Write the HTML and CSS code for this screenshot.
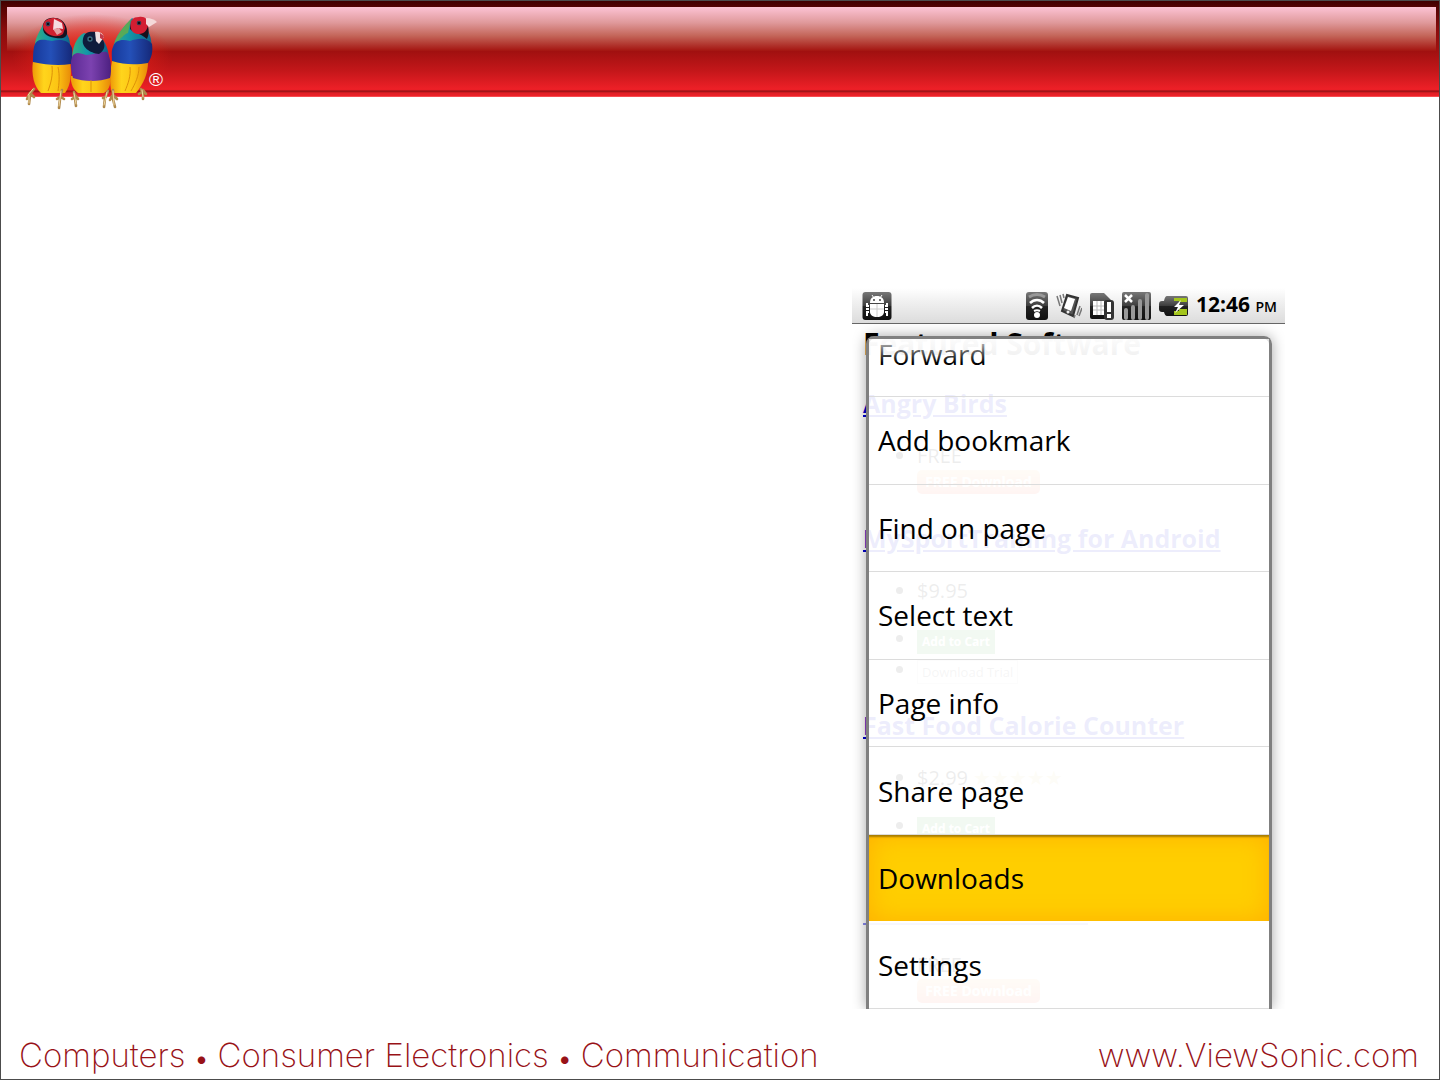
FILE: index.html
```html
<!DOCTYPE html>
<html lang="en">
<head>
    <meta charset="UTF-8">
    <meta name="viewport" content="width=device-width, initial-scale=1.0">
    <title>ViewSonic</title>
    <link rel="stylesheet" href="styles.css">
</head>
<body>

<header class="banner">
    <div class="gloss"></div>
    <svg class="logo" width="200" height="120" viewBox="0 0 200 120" role="img" aria-label="ViewSonic birds">
        <defs>
            <radialGradient id="halo">
                <stop offset="0" stop-color="#ff2018" stop-opacity=".9"/>
                <stop offset=".6" stop-color="#f02018" stop-opacity=".5"/>
                <stop offset="1" stop-color="#e02018" stop-opacity="0"/>
            </radialGradient>
            <linearGradient id="belly" x1="0" x2="1">
                <stop offset="0" stop-color="#ee9a08"/>
                <stop offset=".3" stop-color="#ffd51c"/>
                <stop offset=".65" stop-color="#fcc414"/>
                <stop offset="1" stop-color="#e88a08"/>
            </linearGradient>
            <linearGradient id="blue" x1="0" x2="1">
                <stop offset="0" stop-color="#16389a"/>
                <stop offset=".45" stop-color="#2450b8"/>
                <stop offset="1" stop-color="#152878"/>
            </linearGradient>
            <linearGradient id="purple" x1="0" x2="1">
                <stop offset="0" stop-color="#5c2a94"/>
                <stop offset=".5" stop-color="#7c42b0"/>
                <stop offset="1" stop-color="#4c2080"/>
            </linearGradient>
            <linearGradient id="teal" x1="0" x2="1">
                <stop offset="0" stop-color="#35b07c"/>
                <stop offset=".4" stop-color="#1497a8"/>
                <stop offset="1" stop-color="#0d648c"/>
            </linearGradient>
        </defs>
        <ellipse cx="92" cy="56" rx="80" ry="42" fill="url(#halo)"/>
        <!-- left bird -->
        <path d="M33 61C31 74 34 87 41 93h24c6-8 7-20 5-31z" fill="url(#belly)"/>
        <path d="M43 24c-3 8-9 14-8 25h35c1-11-4-17-7-21z" fill="url(#teal)"/>
        <path d="M34 47c2-9 9-8 18-6 9-2 17-1 20 7 1 6 0 11-1 16-12 2-25 1-38-2 0-5 0-10 1-15z" fill="url(#blue)"/>
        <path d="M43 28c-1-7 5-11 12-10 7 0 12 7 12 13 1 7-5 8-11 7-7-1-13-3-13-10z" fill="#17111f"/>
        <path d="M43 27c0-7 6-9 11-9 6 0 10 4 11 10l-2 6c-7 5-18 1-20-7z" fill="#cf2030"/>
        <path d="M54 19l8 4 1 6-5-1-5 2z" fill="#f5dce0"/>
        <path d="M53 29l6-1 3 4-5 3z" fill="#e3a0a4"/>
        <circle cx="48" cy="24" r="2.4" fill="#333f58"/><circle cx="48" cy="24" r="1" fill="#000"/>
        <path d="M52 66c1 9-1 17-4 25M58 67c2 9 1 17 0 24" stroke="#dd9108" fill="none"/>
        <!-- right bird -->
        <path d="M112 61c-2 10-3 23 0 32h24c8-10 12-20 12-31z" fill="url(#belly)"/>
        <path d="M132 18c-8 9-18 18-19 32h38c2-9-2-19-5-22z" fill="url(#teal)"/>
        <path d="M131 19c-7 7-13 14-16 24 6-4 9-9 13-10z" fill="#58aa58"/>
        <path d="M113 47c2-7 9-8 17-6 8-3 17-4 22 3 1 7 0 13-4 19-11 2-24 2-36-2 0-5-1-10 1-14z" fill="url(#blue)"/>
        <path d="M130 29c2 3 10 4 17 10 2-4 2-9 1-13l-7-8c-6-1-11 4-11 11z" fill="#17101c"/>
        <path d="M131 29c-2-9 2-12 8-12 6-1 9 3 9 7 0 6-4 10-9 10-4 0-7-2-8-5z" fill="#d31e32"/>
        <path d="M146 18c5 0 9 2 11 4l-8 5-3-3z" fill="#f4d9d9"/>
        <circle cx="139" cy="23" r="2.3" fill="#30384c"/><circle cx="139" cy="23" r="1" fill="#000"/>
        <path d="M130 67c1 9-2 17-5 24M139 67c0 9-4 17-8 24" stroke="#dd9108" fill="none"/>
        <!-- middle bird -->
        <path d="M71 76c-1 8 3 14 7 17h26c6-4 7-10 6-17z" fill="url(#belly)"/>
        <path d="M84 33c-8 4-12 15-12 27h37c0-9-3-16-6-20z" fill="url(#teal)"/>
        <path d="M72 57c3-6 8-4 14-2 8 0 13-4 21-3 4 6 5 18 3 26-11 4-26 4-37 0-2-7-3-14-1-21z" fill="url(#purple)"/>
        <path d="M83 39c1-7 7-8 13-7l6 6c4 7 3 12-3 16-9-1-18-7-16-15z" fill="#0e1c3c"/>
        <path d="M95 32c5-1 8 2 9 5l-5 7-3-3z" fill="#eee1e3"/><path d="M100 33l4 3-1 4-3-2z" fill="#c33a48"/>
        <circle cx="90" cy="39" r="2.7" fill="#3b6c80"/><circle cx="90" cy="39" r="1.3" fill="#05091a"/>
        <path d="M91 80v12" stroke="#dd9108"/>
        <!-- feet -->
        <g fill="none" stroke="#b08a4c" stroke-width="2.6" stroke-linecap="round">
            <path d="M34 89l-5 6-2 4M30 95l-1 9M30 93l4 4M62 90l-2 9-1 9M60 97l-3 2M61 97l3 2M74 92l1 6 1 8M75 97l-3 2M75 95l3 4M108 91l-3 7-1 9M106 97l-3 1M113 90v9l2 8M113 95l4 4M112 96l-2 4M141 89l2 5v5M142 92l-3 2M143 90l3 4"/>
        </g>
        <g fill="none" stroke="#f1d9a0" stroke-linecap="round">
            <path d="M33 89l-5 6M29 95v8M61 91l-2 15M74 93l2 11M107 92l-3 13M113 91l1 14M142 90l1 7"/>
        </g>
        <text class="registered" x="149" y="86">®</text>
    </svg>
</header>

<main class="content">
    <section class="phone">
        <div class="status-bar">
            <svg width="30" height="30" viewBox="0 0 30 30" aria-label="Android">
                <defs>
                    <linearGradient id="tile" x2="0" y2="1">
                        <stop offset="0" stop-color="#777"/>
                        <stop offset=".5" stop-color="#3c3c3c"/>
                        <stop offset=".52" stop-color="#222"/>
                        <stop offset="1" stop-color="#111"/>
                    </linearGradient>
                </defs>
                <rect x=".5" y="1" width="29" height="28" rx="3" fill="url(#tile)"/>
                <path d="M8 12c0-5 3-7 7-7s7 2 7 7z" fill="#fff"/>
                <path d="M10 4l2 3M20 4l-2 3" stroke="#fff"/>
                <circle cx="12" cy="9" r="1" fill="#444"/><circle cx="18" cy="9" r="1" fill="#444"/>
                <path d="M8 13h14v8c0 3-3 5-7 5s-7-2-7-5z" fill="#fff"/>
                <path d="M15 13v13M8 18h14" stroke="#ccc"/>
                <path d="M7 15H5v-3M7 18H4M7 21H5v4M23 15h2v-3M23 18h3M23 21h2v4" stroke="#fff" stroke-width="2" fill="none"/>
            </svg>
            <div class="status-icons">
                <svg width="22" height="30" viewBox="0 0 22 30" aria-label="Wi-Fi">
                    <rect y="1" width="22" height="28" rx="3" fill="url(#tile)"/>
                    <path d="M3 6c5-3 11-3 16 0" stroke="#999" stroke-width="3" fill="none"/>
                    <path d="M4 12c4-4 10-4 14 0M6 17c3-3 7-3 10 0" stroke="#fff" stroke-width="2.5" fill="none"/>
                    <path d="M8 20c2-1 4-1 6 0" stroke="#fff" stroke-width="2" fill="none"/>
                    <circle cx="11" cy="24" r="3" fill="#fff"/>
                </svg>
                <svg width="26" height="30" viewBox="0 0 26 30" aria-label="Vibrate">
                    <path d="M11 4l11 3-5 18-11-5z" fill="#555" stroke="#333" stroke-width="2"/>
                    <path d="M12 6l7 2-4 12-7-3z" fill="#fff"/><circle cx="12" cy="21" r="1.5" fill="#eee"/>
                    <path d="M1 5l3 10M4 4l2 8M7 3l1 4M24 15l-3 9M26 17l-3 8M19 24l-1 3" stroke="#777" stroke-width="1.5"/>
                </svg>
                <svg width="24" height="30" viewBox="0 0 24 30" aria-label="SIM card">
                    <path d="M2 2h12l7 7v17q0 2-2 2H2q-2 0-2-2V4q0-2 2-2z" fill="url(#tile)"/>
                    <path d="M3 10h11v14H3z" fill="#fff"/><path d="M3 15h11M3 19h11M7 10v14M11 10v14" stroke="#bbb"/>
                    <rect x="14" y="9" width="10" height="20" rx="3" fill="#333"/>
                    <path d="M19 11v10M19 23v4" stroke="#fff" stroke-width="4"/>
                </svg>
                <svg width="29" height="30" viewBox="0 0 29 30" aria-label="No signal">
                    <rect y="1" width="29" height="28" rx="2" fill="url(#tile)"/>
                    <path d="M3 4l7 7M10 4l-7 7" stroke="#fff" stroke-width="2.5"/>
                    <path d="M4 27v-8M11 27V16M18 27V10M25 27V4" stroke="#999" stroke-width="4" stroke-linecap="round"/>
                </svg>
                <svg width="29" height="30" viewBox="0 0 29 30" aria-label="Charging">
                    <path d="M8 5h19q2 0 2 2v16q0 2-2 2H8q-2 0-3-4H3q-3 0-3-3v-5q0-3 3-3h2q1-5 3-5z" fill="url(#tile)"/>
                    <path d="M15 7h13v4h-8v-1h-5zM15 20h5v-2h8v6H15z" fill="#a3c51c"/>
                    <path d="M22 9l-7 7h4l-3 6 9-8h-5z" fill="#fff"/>
                </svg>
                <span class="clock">12:46 <small>PM</small></span>
            </div>
        </div>

        <div class="web-page">
            <h1>Featured Software</h1>
            <h2><a href="#">Angry Birds</a></h2>
            <ul class="free">
                <li>FREE<br><button class="free-button" type="button">FREE Download</button></li>
            </ul>
            <h2><a href="#">MySportTraining for Android</a></h2>
            <ul>
                <li>$9.95</li>
                <li class="cart"><button class="cart-button" type="button">Add to Cart</button></li>
                <li><button class="trial-button" type="button">Download Trial</button></li>
            </ul>
            <h2><a href="#">Fast Food Calorie Counter</a></h2>
            <ul>
                <li>$2.99 <span class="stars">★★★★★</span></li>
                <li class="cart"><button class="cart-button" type="button">Add to Cart</button></li>
                <li><button class="trial-button" type="button">Download Trial</button></li>
            </ul>
            <div class="hidden-link"></div>
            <ul class="free">
                <li>FREE<br><button class="free-button" type="button">FREE Download</button></li>
            </ul>
        </div>

        <nav class="menu">
            <button type="button">Forward</button>
            <button type="button">Add bookmark</button>
            <button type="button">Find on page</button>
            <button type="button">Select text</button>
            <button type="button">Page info</button>
            <button type="button">Share page</button>
            <button type="button" class="selected">Downloads</button>
            <button type="button">Settings</button>
        </nav>
    </section>
</main>

<footer class="footer">
    <span class="tagline">Computers <b>•</b> Consumer Electronics <b>•</b> Communication</span>
    <a href="#">www.ViewSonic.com</a>
</footer>

</body>
</html>
```
FILE: styles.css
```css
* {
    box-sizing: border-box;
}
body {
    margin: 0;
    min-height: 100vh;
    display: flex;
    flex-direction: column;
    border: 1px solid #4c4c4c;
    background: #fff;
    font-family: "Open Sans", "Noto Sans", sans-serif;
}
.banner {
    position: relative;
    height: 96px;
    padding: 6px 3px 0 6px;
    background: linear-gradient(#400000 0, #540303 6px, #8c0c0c 30px, #a01010 50px, #c4171a 70px, #ed2027 88px, #e81e25 89px, #8e1014 90px, #b8181c 91px, #e02026 92px, #ee2128 95px, #f77 96px);
}
.gloss {
    height: 44px;
    background: linear-gradient(#fcc3d4, #e09a9c 35%, #c4665a 65%, #a41410);
}
.logo {
    position: absolute;
    top: -1px;
    left: -1px;
}
.registered {
    font: 19px "Liberation Sans", sans-serif;
    fill: #fff;
}
.content {
    flex: 1;
    display: flex;
    justify-content: flex-end;
    padding: 191px 154px 0 0;
}
.phone {
    position: relative;
    width: 433px;
    height: 721px;
    overflow: hidden;
}
.status-bar {
    display: flex;
    align-items: center;
    justify-content: space-between;
    height: 36px;
    padding: 0 8px 0 10px;
    border-bottom: 1px solid #666;
    background: linear-gradient(#fff, #f0f0f0 40%, #dcdcdc);
}
.status-icons {
    display: flex;
    align-items: center;
    gap: 8px;
}
.status-icons svg {
    flex: none;
}
.clock {
    font-size: 21px;
    font-weight: 700;
    line-height: 34px;
    white-space: nowrap;
}
.clock small {
    font-size: 14px;
    font-weight: 600;
}

/* page behind the menu */
.web-page {
    padding: 0 11px;
    font-size: 20px;
    line-height: 28px;
}
.web-page h1 {
    margin: 0 0 24px;
    font-size: 30px;
    line-height: 40px;
}
.web-page h2 {
    margin: 0 0 24px;
    font-size: 25px;
    line-height: 30px;
    white-space: nowrap;
}
.web-page a {
    color: #00c;
}
.web-page ul {
    margin: 0 0 26px;
    padding-left: 54px;
}
.web-page .free {
    margin-bottom: 29px;
}
.web-page li {
    height: 28px;
}
.web-page .free li {
    height: 52px;
}
.web-page .cart {
    height: 31px;
    margin-top: 20px;
}
.web-page button {
    display: block;
    border: 0;
    font: 700 14px/22px "Open Sans", sans-serif;
    color: #fff;
    white-space: nowrap;
}
.web-page .free-button {
    width: 123px;
    height: 24px;
    border-radius: 5px;
    background: linear-gradient(#fc8, #f97058);
}
.web-page .cart-button {
    display: inline-block;
    height: 24px;
    width: 78px;
    padding: 0;
    background: #4aaa4a;
    font-size: 12px;
}
.web-page .trial-button {
    display: inline-block;
    height: 24px;
    padding: 0 4px;
    border: 1px solid #ccc;
    background: #fff;
    font-size: 13px;
    font-weight: 400;
    color: #777;
}
.stars {
    color: #dc8;
}
.hidden-link {
    width: 225px;
    height: 28px;
    margin-bottom: 26px;
    border-bottom: 2px solid #88e;
}

/* browser menu */
.menu {
    position: absolute;
    top: 48px;
    right: 13px;
    bottom: 0;
    left: 14px;
    display: flex;
    flex-direction: column;
    border: 3px solid #808080;
    border-bottom: 0;
    border-radius: 8px 8px 0 0;
    background: rgba(255, 255, 255, .93);
    box-shadow: 0 0 14px rgba(0, 0, 0, .35);
}
.menu::before {
    content: "";
    position: absolute;
    inset: 0 0 auto;
    height: 24px;
    background: linear-gradient(#fff, rgba(255, 255, 255, 0));
    opacity: .8;
}
.menu button {
    flex: 1;
    padding: 0 9px;
    border: 0;
    border-bottom: 1px solid #dcdcdc;
    background: none;
    font: 28px/30px "Open Sans", "Noto Sans", sans-serif;
    text-align: left;
    color: #000;
}
.menu button:first-child {
    flex: 0 0 58px;
    padding-bottom: 27px;
}
.menu .selected {
    border: 0;
    background: #ffce00;
    box-shadow: inset 0 3px 2px -1px #a87c00, inset 0 0 26px #ffb000;
}

.footer {
    display: flex;
    align-items: center;
    justify-content: space-between;
    height: 48px;
    margin-top: 22px;
    padding: 0 20px 0 18px;
    font-family: Inter, "Open Sans", sans-serif;
    font-size: 33px;
    font-weight: 200;
    color: #981217;
}
.footer a {
    color: inherit;
    text-decoration: none;
}
.footer b {
    font-size: 24px;
}
```
